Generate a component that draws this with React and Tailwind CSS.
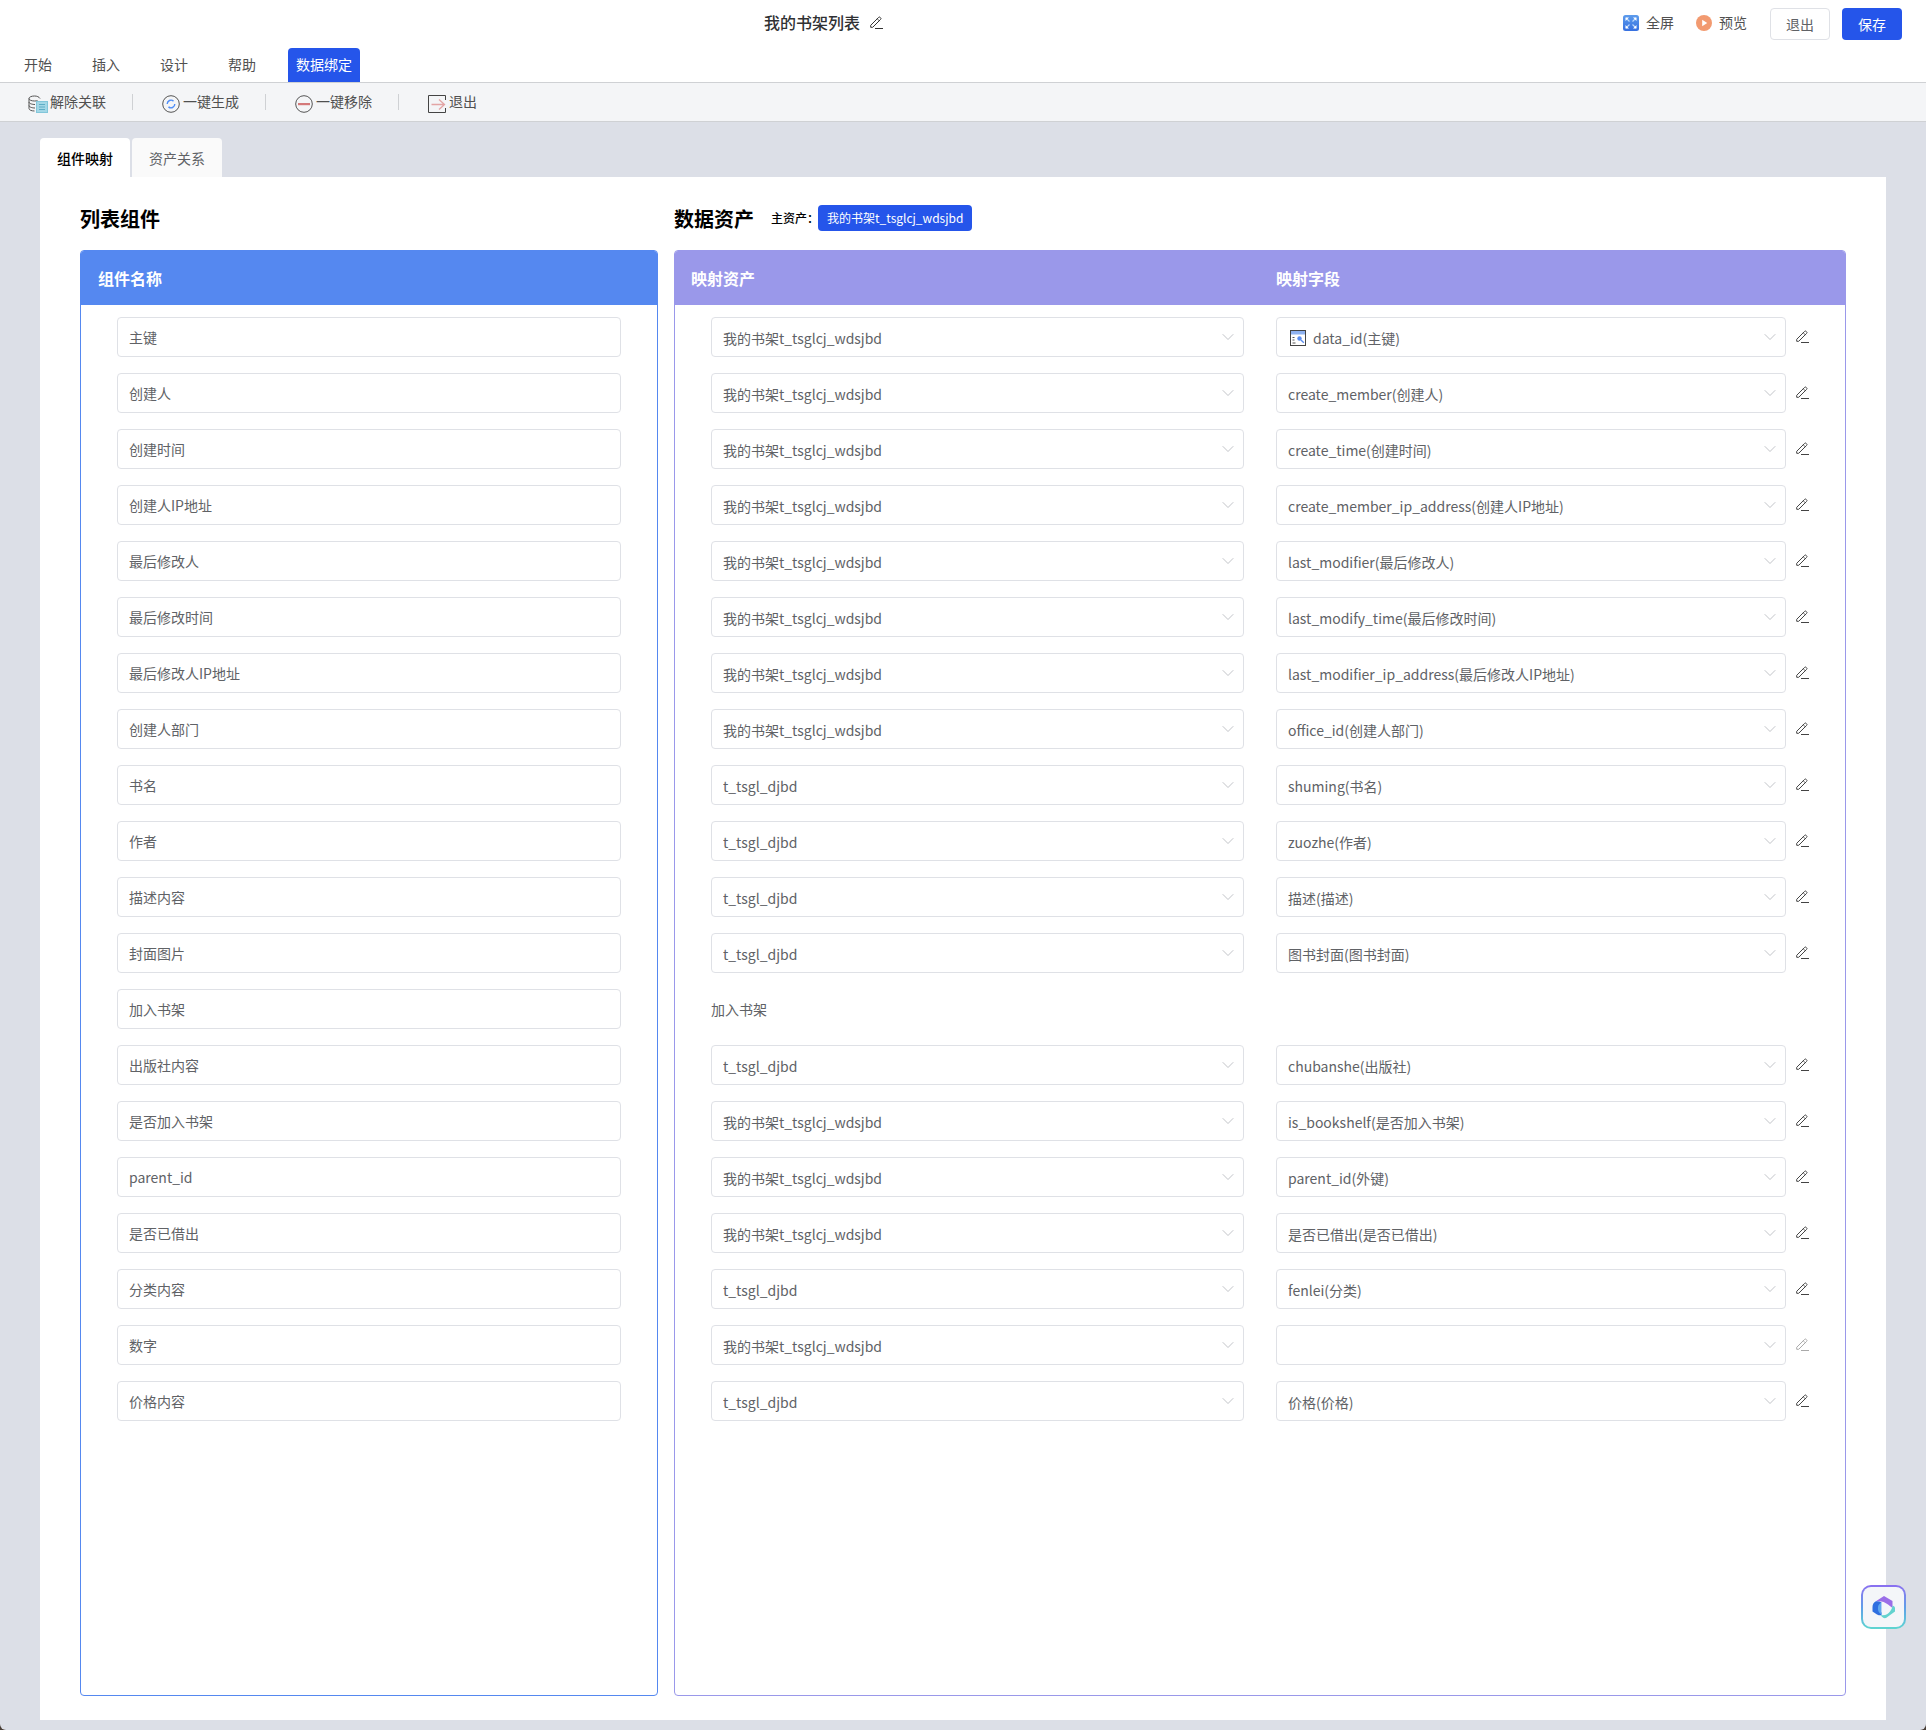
import React from 'react';
import { ChevronDown } from 'lucide-react';

const MY = '我的书架t_tsglcj_wdsjbd';
const DJ = 't_tsgl_djbd';

const leftRows = [
  '主键', '创建人', '创建时间', '创建人IP地址', '最后修改人', '最后修改时间', '最后修改人IP地址', '创建人部门',
  '书名', '作者', '描述内容', '封面图片', '加入书架', '出版社内容', '是否加入书架', 'parent_id', '是否已借出',
  '分类内容', '数字', '价格内容',
];

const rightRows = [
  { asset: MY, field: 'data_id(主键)', keyIcon: true },
  { asset: MY, field: 'create_member(创建人)' },
  { asset: MY, field: 'create_time(创建时间)' },
  { asset: MY, field: 'create_member_ip_address(创建人IP地址)' },
  { asset: MY, field: 'last_modifier(最后修改人)' },
  { asset: MY, field: 'last_modify_time(最后修改时间)' },
  { asset: MY, field: 'last_modifier_ip_address(最后修改人IP地址)' },
  { asset: MY, field: 'office_id(创建人部门)' },
  { asset: DJ, field: 'shuming(书名)' },
  { asset: DJ, field: 'zuozhe(作者)' },
  { asset: DJ, field: '描述(描述)' },
  { asset: DJ, field: '图书封面(图书封面)' },
  { label: '加入书架' },
  { asset: DJ, field: 'chubanshe(出版社)' },
  { asset: MY, field: 'is_bookshelf(是否加入书架)' },
  { asset: MY, field: 'parent_id(外键)' },
  { asset: MY, field: '是否已借出(是否已借出)' },
  { asset: DJ, field: 'fenlei(分类)' },
  { asset: MY, field: '', muted: true },
  { asset: DJ, field: '价格(价格)' },
];

const Pencil = ({ color = '#444444' }) => (
  <svg width="13" height="13" viewBox="0 0 13 13" fill="none" className="shrink-0">
    <path d="M0.700 9.300 8.600 1.400a1.100 1.100 0 0 1 1.600 0l0.400 0.400a1.100 1.100 0 0 1 0 1.600L2.700 11.300H0.700z" stroke={color} strokeWidth="1" />
    <path d="M7.300 2.800l2.300 2.300" stroke={color} strokeWidth="0.800" />
    <path d="M5 12.500h8" stroke={color} strokeWidth="1" />
  </svg>
);

const DbIcon = () => (
  <svg width="20" height="18" viewBox="0 0 20 18" fill="none">
    <path d="M12 3.500C11 1.800 9 1 6.500 1 3.500 1 1 2 1 3.500v10C1 15 3.500 16 6.500 16" stroke="#555" strokeWidth="1" />
    <path d="M1 3.500C1 5 3.500 6 6.500 6c1.200 0 2.200-0.100 3-0.400M1 7c0 1.500 3 2.500 6 2.500M1 10.500c0 1.500 3 2.500 6 2.500" stroke="#555" strokeWidth="1" />
    <rect x="8.500" y="6.500" width="11" height="11" fill="#a3d7e6" stroke="#82c6da" />
    <path d="M11 9.500h6M11 12h6M11 14.500h6" stroke="#5fadc6" strokeWidth="1" />
  </svg>
);

const SyncIcon = () => (
  <svg width="18" height="18" viewBox="0 0 18 18" fill="none">
    <circle cx="9" cy="9" r="8.300" stroke="#555" strokeWidth="1" />
    <path d="M5.200 9a3.800 3.800 0 0 1 6.300-2.900" stroke="#4f8ef7" strokeWidth="1.400" />
    <path d="M12.800 9a3.800 3.800 0 0 1-6.300 2.900" stroke="#4f8ef7" strokeWidth="1.400" />
  </svg>
);

const MinusIcon = () => (
  <svg width="18" height="18" viewBox="0 0 18 18" fill="none">
    <circle cx="9" cy="9" r="8.300" stroke="#555" strokeWidth="1" />
    <rect x="3" y="8" width="12" height="2.200" fill="#d4797a" />
  </svg>
);

const ExitIcon = () => (
  <svg width="18" height="18" viewBox="0 0 18 18" fill="none">
    <path d="M17.500 5V0.500H0.500v17h17V13" stroke="#444" strokeWidth="1" />
    <path d="M3.500 9.500h13M11 4.500l5.500 5-5.500 5" stroke="#e3a5a5" strokeWidth="1.300" />
  </svg>
);

const FullIcon = () => (
  <svg width="16" height="16" viewBox="0 0 16 16">
    <defs>
      <linearGradient id="fullGrad" x1="0" y1="0" x2="0" y2="1">
        <stop offset="0" stopColor="#5d9cec" />
        <stop offset="1" stopColor="#3670e0" />
      </linearGradient>
    </defs>
    <rect width="16" height="16" rx="2.500" fill="url(#fullGrad)" />
    <path d="M3 3l3.500 3.500M13 3 9.500 6.500M3 13l3.500-3.500M13 13 9.500 9.500" stroke="#bcd8fb" strokeWidth="1.200" />
    <path d="M2.500 2.500h3.500l-3.500 3.500zM13.500 2.500H10l3.500 3.500zM2.500 13.500H6l-3.500-3.500zM13.500 13.500H10l3.500-3.500z" fill="#fff" />
  </svg>
);

const PreviewIcon = () => (
  <svg width="16" height="16" viewBox="0 0 16 16">
    <circle cx="8" cy="8" r="8" fill="#f29a70" />
    <path d="M6.200 4.800v6.400L11.200 8z" fill="#fff" />
  </svg>
);

const TableKeyIcon = () => (
  <svg width="16" height="16" viewBox="0 0 16 16" fill="none" className="ml-0.5 shrink-0">
    <rect x="0.500" y="0.500" width="15" height="15" fill="#fff" stroke="#444" />
    <rect x="1" y="1" width="14" height="3.500" fill="#8fb2f0" />
    <path d="M2.500 7.500h2M2.500 10h2M2.500 13h3" stroke="#555" />
    <circle cx="9.500" cy="8.500" r="2.200" fill="#5b8def" />
    <path d="M11 10l2.800 2.800" stroke="#5b8def" strokeWidth="1.400" />
  </svg>
);

const FloatLogo = () => (
  <svg width="24" height="24" viewBox="0 0 24 24">
    <path d="M3.500 6.500 12 1l8.500 5v7L16 9.500C12.500 6.500 8 5.500 3.500 6.500z" fill="#9a6ee8" />
    <path d="M3.500 6.500C1.500 7.500 0.500 9.500 0.500 12v4.500L5 19.500c2 1 4 1 4.500 0.500V7.500C7.500 6.500 5.500 6 3.500 6.500z" fill="#2f6fe0" />
    <path d="M9.500 19.500C6.500 18 5.500 15 6 12c0.300-2 1.500-3.500 3.500-4.500z" fill="#5fa8ee" />
    <path d="M9.500 7.500 18 12.500 9.500 17.500z" fill="#f2f5fb" />
    <path d="M20.500 10.500c1.500 0.500 2.500 1.500 2.500 2.500v3.500L14 23c-2 0.500-4-0.500-5.500-3 4 1 7.500-0.500 9.500-3.500 1.500-2 2.500-4 2.500-6z" fill="#63d3cf" />
  </svg>
);

const Box = ({ children, className = '' }) => (
  <div className={`h-10 flex items-center rounded border border-[#dfe1e6] bg-white px-[11px] text-sm text-[#606266] ${className}`}>
    {children}
  </div>
);

const Select = ({ className, children }) => (
  <Box className={`justify-between ${className}`}>
    <span className="flex items-center gap-[7px] truncate pt-0.5">{children}</span>
    <ChevronDown className="w-5 h-5 mb-px -mr-1.5 text-[#b4b7bd]" strokeWidth={1} />
  </Box>
);

const App = () => {
  return (
    <div className="bg-[#4a3f38]">
      <div className="relative h-[1730px] flex flex-col rounded-b-md bg-[#dcdfe7] font-['Noto_Sans_CJK_SC',sans-serif]">
        <header className="h-[83px] bg-white border-b border-[#cfd1d4] flex flex-col">
          <div className="h-[46px] flex items-center">
            <div className="ml-[764px] flex items-center gap-2.5 text-base font-medium text-[#303133] pb-0.5">
              我的书架列表
              <Pencil color="#333333" />
            </div>
            <div className="ml-auto mr-6 flex items-center text-sm text-[#505050]">
              <FullIcon />
              <span className="ml-[7px] pb-0.5">全屏</span>
              <span className="ml-[22px]"><PreviewIcon /></span>
              <span className="ml-[7px] pb-0.5">预览</span>
              <button className="ml-[23px] mt-0.5 h-8 w-[60px] rounded border border-[#dfe1e6] bg-white pb-px text-[#606266]">退出</button>
              <button className="ml-3 mt-0.5 h-8 w-[60px] rounded bg-[#2555ea] pb-px text-white">保存</button>
            </div>
          </div>
          <nav className="mt-0.5 h-[34px] flex items-center pl-6 text-sm text-[#505050]">
            <span className="w-[68px] pb-0.5">开始</span>
            <span className="w-[68px] pb-0.5">插入</span>
            <span className="w-[68px] pb-0.5">设计</span>
            <span className="w-[60px] pb-0.5">帮助</span>
            <span className="w-[72px] h-[34px] flex items-center justify-center rounded-t bg-[#2555ea] pb-0.5 text-white">数据绑定</span>
          </nav>
        </header>

        <div className="h-[39px] bg-[#f4f5f7] border-b border-[#cfd1d4] flex items-center pl-7 text-sm text-[#505050]">
          <span className="mt-1"><DbIcon /></span>
          <span className="ml-0.5 pb-0.5">解除关联</span>
          <span className="ml-[26px] h-4 w-px bg-[#cfd1d4]" />
          <span className="ml-[29px] mt-1"><SyncIcon /></span>
          <span className="ml-[3px] pb-0.5">一键生成</span>
          <span className="ml-[26px] h-4 w-px bg-[#cfd1d4]" />
          <span className="ml-[29px] mt-1"><MinusIcon /></span>
          <span className="ml-[3px] pb-0.5">一键移除</span>
          <span className="ml-[26px] h-4 w-px bg-[#cfd1d4]" />
          <span className="ml-[29px] mt-1"><ExitIcon /></span>
          <span className="ml-[3px] pb-0.5">退出</span>
        </div>

        <main className="flex-1 flex flex-col px-10 pt-4 pb-2.5">
          <div className="flex gap-0.5 text-sm">
            <div className="w-[90px] h-[39px] flex items-center justify-center rounded-t bg-white font-medium text-black">组件映射</div>
            <div className="w-[90px] h-[39px] flex items-center justify-center rounded-t bg-[#fafafa] text-[#606266]">资产关系</div>
          </div>

          <div className="flex-1 bg-white px-10 pt-7 pb-6 flex gap-4">
            <section className="w-[578px] flex flex-col">
              <h2 className="h-[45px] text-xl font-bold text-black leading-7">列表组件</h2>
              <div className="flex-1 rounded border border-[#5588f0] overflow-hidden">
                <div className="h-[54px] bg-[#5588f0] flex items-center pl-[17px] text-base font-bold text-white">组件名称</div>
                <div className="pt-3 pl-9 pr-9 flex flex-col gap-4">
                  {leftRows.map((name) => (
                    <Box key={name}>{name}</Box>
                  ))}
                </div>
              </div>
            </section>

            <section className="flex-1 flex flex-col">
              <div className="h-[45px] flex items-start">
                <h2 className="text-xl font-bold text-black leading-7">数据资产</h2>
                <span className="ml-[17px] h-[26px] flex items-center text-xs font-medium text-black">主资产：</span>
                <span className="-ml-px h-[26px] px-[9px] flex items-center rounded-sm bg-[#2555ea] text-xs text-white">{MY}</span>
              </div>
              <div className="flex-1 rounded border border-[#9a98ea] overflow-hidden">
                <div className="h-[54px] bg-[#9a98ea] flex items-center pl-[16px] text-base font-bold text-white">
                  <span className="w-[585px]">映射资产</span>
                  <span>映射字段</span>
                </div>
                <div className="pt-3 pl-9 flex flex-col gap-4">
                  {rightRows.map((row, i) =>
                    row.label ? (
                      <div key={i} className="h-10 flex items-center text-sm text-[#606266]">{row.label}</div>
                    ) : (
                      <div key={i} className="flex items-center">
                        <Select className="w-[533px]">{row.asset}</Select>
                        <Select className="ml-8 w-[510px]">
                          {row.keyIcon && <TableKeyIcon />}
                          {row.field}
                        </Select>
                        <span className="ml-[10px] mb-0.5">
                          <Pencil color={row.muted ? '#aaaaaa' : '#444444'} />
                        </span>
                      </div>
                    )
                  )}
                </div>
              </div>
            </section>
          </div>
        </main>

        <button className="absolute left-[1861px] top-[1585px] w-[45px] h-[44px] rounded-[10px] bg-linear-to-b from-[#8a6ff0] via-[#5f9de8] to-[#5fd6d0] p-0.5">
          <span className="w-full h-full flex items-center justify-center rounded-lg bg-[#f4f6f9]">
            <FloatLogo />
          </span>
        </button>
      </div>
    </div>
  );
};

export default App;
